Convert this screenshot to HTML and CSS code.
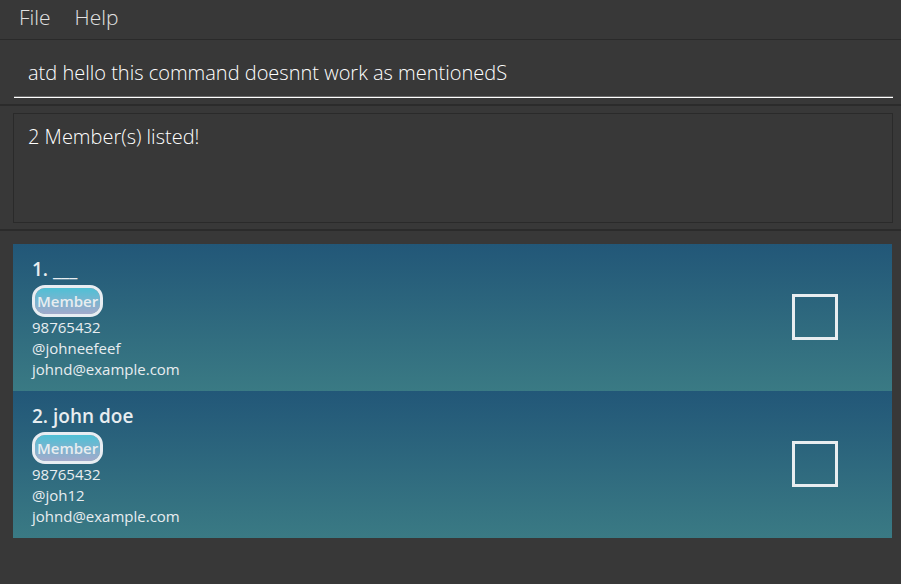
FILE: index.html
```html
<!DOCTYPE html>
<html lang="en">
<head>
<meta charset="utf-8">
<title>Members</title>
<link rel="stylesheet" href="styles.css">
</head>
<body>
<nav class="menu-bar">
  <button class="menu" type="button">File</button>
  <button class="menu" type="button">Help</button>
</nav>
<form class="command-pane">
  <input class="command" type="text" aria-label="Command" value="atd hello this command doesnnt work as mentionedS">
</form>
<section class="result-pane">
  <output class="result">2 Member(s) listed!</output>
</section>
<main class="list-pane">
  <ul class="members">
    <li class="card">
      <div class="details">
        <h2 class="name">1. ___</h2>
        <span class="tag">Member</span>
        <p class="line">98765432</p>
        <p class="line">@johneefeef</p>
        <p class="line">johnd@example.com</p>
      </div>
      <input class="check" type="checkbox" aria-label="Select member 1">
    </li>
    <li class="card">
      <div class="details">
        <h2 class="name">2. john doe</h2>
        <span class="tag">Member</span>
        <p class="line">98765432</p>
        <p class="line">@joh12</p>
        <p class="line">johnd@example.com</p>
      </div>
      <input class="check" type="checkbox" aria-label="Select member 2">
    </li>
  </ul>
</main>
</body>
</html>
```
FILE: styles.css
```css
* {
  box-sizing: border-box;
}

body {
  margin: 0;
  min-height: 100vh;
  background: #383838;
  color: #e8edf0;
  font-family: "Open Sans", "Noto Sans", sans-serif;
}

.menu-bar {
  display: flex;
  gap: 24px;
  padding: 0 19px;
  border-bottom: 1px solid #2a2a2a;
}

.menu {
  padding: 0 0 5px;
  border: 0;
  background: none;
  color: #e2e2e2;
  font: 300 21px/34px "Open Sans", "Noto Sans", sans-serif;
}

.command-pane {
  padding: 8px 8px 6px 14px;
  border-bottom: 2px solid #2b2b2b;
}

.command {
  display: block;
  width: 100%;
  height: 50px;
  padding: 0 14px;
  border: 0;
  border-bottom: 1px solid #fff;
  box-shadow: inset 0 -1px #6a6a6a;
  outline: 0;
  background: none;
  color: #fff;
  font: 300 20px/48px "Open Sans", "Noto Sans", sans-serif;
}

.result-pane {
  padding: 7px 8px 6px 13px;
  border-bottom: 2px solid #2b2b2b;
}

.result {
  display: block;
  min-height: 110px;
  padding: 8px 14px;
  border: 1px solid #2a2a2a;
  color: #fff;
  font-size: 20px;
  font-weight: 300;
  line-height: 30px;
}

.list-pane {
  padding: 13px 9px 13px 13px;
}

.members {
  margin: 0;
  padding: 0;
  list-style: none;
}

.card {
  display: flex;
  align-items: center;
  justify-content: space-between;
  padding: 10px 54px 11px 19px;
  background: linear-gradient(#225778, #3a7a84);
}

.details {
  display: flex;
  flex-direction: column;
  align-items: flex-start;
}

.name {
  margin: 0;
  font-size: 19px;
  font-weight: 600;
  line-height: 31px;
}

.tag {
  padding: 0 2px;
  border: 3px solid #e8edf2;
  border-radius: 13px;
  background: linear-gradient(#4fc0d5, #a3aacb) padding-box;
  font-size: 15px;
  font-weight: 600;
  line-height: 26px;
}

.line {
  margin: 0;
  font-size: 15px;
  line-height: 21px;
}

.check {
  width: 46px;
  height: 46px;
  margin: 0;
  border: 3px solid #e8edf0;
  appearance: none;
}
```
